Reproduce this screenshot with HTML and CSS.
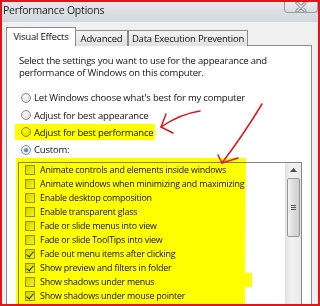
FILE: index.html
```html
<!DOCTYPE html>
<html lang="en">
<head>
    <meta charset="UTF-8">
    <title>Performance Options</title>
    <link rel="stylesheet" href="styles.css">
</head>
<body>
    <div class="frame">
        <div class="titlebar">
            <span class="title">Performance Options</span>
            <span class="close">
                <svg width="14" height="10" viewBox="0 0 14 10">
                    <path d="M3 1 L11 9 M11 1 L3 9" stroke="#6f737a" stroke-width="3" stroke-linecap="round"/>
                    <path d="M3 1 L11 9 M11 1 L3 9" stroke="#ffffff" stroke-width="1.4" stroke-linecap="round"/>
                </svg>
            </span>
        </div>

        <div class="window-body">
            <div class="tabs">
                <div class="tab active">Visual Effects</div>
                <div class="tab tab-adv">Advanced</div>
                <div class="tab tab-dep">Data Execution Prevention</div>
            </div>

            <div class="panel">
                <p class="intro">Select the settings you want to use for the appearance and<br>performance of Windows on this computer.</p>

                <div class="radios">
                    <div class="radio"><span class="dot"></span>Let Windows choose what's best for my computer</div>
                    <div class="radio"><span class="dot"></span>Adjust for best appearance</div>
                    <div class="radio"><span class="dot"></span>Adjust for best performance</div>
                    <div class="radio"><span class="dot on"></span>Custom:</div>
                </div>

                <div class="listbox">
                    <ul class="items">
                        <li><span class="check"></span>Animate controls and elements inside windows</li>
                        <li><span class="check"></span>Animate windows when minimizing and maximizing</li>
                        <li><span class="check"></span>Enable desktop composition</li>
                        <li><span class="check"></span>Enable transparent glass</li>
                        <li><span class="check"></span>Fade or slide menus into view</li>
                        <li><span class="check"></span>Fade or slide ToolTips into view</li>
                        <li><span class="check on"></span>Fade out menu items after clicking</li>
                        <li><span class="check on"></span>Show preview and filters in folder</li>
                        <li><span class="check"></span>Show shadows under menus</li>
                        <li><span class="check on"></span>Show shadows under mouse pointer</li>
                    </ul>
                    <div class="scrollbar">
                        <div class="sb-up">
                            <svg width="7" height="4" viewBox="0 0 7 4"><path d="M0 4 L3.5 0 L7 4 Z" fill="#4d4d4d"/></svg>
                        </div>
                        <div class="sb-thumb"><span class="grip"></span></div>
                    </div>
                </div>
            </div>
        </div>

        <!-- marker highlights drawn on top of the dialog -->
        <svg class="marker" width="320" height="306" viewBox="0 0 320 306">
            <rect x="15" y="124" width="140" height="16" fill="#ffff00"/>
            <polygon points="16,158 246,158 245,273 252,273 252,287 245,287 245,306 16,306" fill="#ffff00"/>
        </svg>

        <svg class="arrows" width="320" height="306" viewBox="0 0 320 306">
            <g fill="none" stroke="#e3141b" stroke-width="1.5" stroke-linecap="round" stroke-linejoin="round">
                <path d="M200 111 Q180 114 161 127"/>
                <path d="M166 114 L161 127 L173 133"/>
                <path d="M262 104 Q244 134 222 163"/>
                <path d="M218 155 L222 163 L238 158"/>
            </g>
        </svg>
    </div>
</body>
</html>
```

FILE: styles.css
```css
body {
    margin: 0;
    font-family: "Open Sans", "Noto Sans", sans-serif;
    font-size: 9.5px;
    letter-spacing: -0.2px;
    color: #111;
}
.frame {
    position: relative;
    width: 320px;
    height: 306px;
    box-sizing: border-box;
    border: 2px solid #e3141b;
    background: #f0f0f0;
    overflow: hidden;
}
.titlebar {
    display: flex;
    height: 20px;
    background: linear-gradient(#e4e7eb, #d3d8de);
}
.title {
    padding: 1px 0 0 1px;
    line-height: 14px;
    font-size: 10.5px;
    color: #222;
}
.close {
    margin-left: auto;
    width: 32px;
    height: 10px;
    display: flex;
    justify-content: center;
    align-items: center;
    border: 1px solid #9a9ca0;
    border-top: 0;
    border-radius: 0 0 4px 4px;
    background: linear-gradient(#eceef1, #d8dce1);
}
.window-body {
    padding: 5px 6px 0 4px;
}
.tabs {
    display: flex;
    align-items: flex-end;
    margin-bottom: -1px;
}
.tab {
    box-sizing: border-box;
    height: 16px;
    border: 1px solid #898c95;
    border-bottom: 0;
    background: linear-gradient(#f3f3f3, #e1e1e1);
    text-align: center;
    line-height: 15px;
    white-space: nowrap;
}
.tab.active {
    position: relative;
    z-index: 1;
    width: 70px;
    height: 19px;
    line-height: 17px;
    background: #fff;
}
.tab-adv {
    width: 52px;
    border-left: 0;
}
.tab-dep {
    width: 120px;
    border-left: 1px solid #898c95;
}
.panel {
    height: 300px;
    border: 1px solid #898c95;
    background: #fff;
    padding: 9px 0 0 12px;
}
.intro {
    margin: 0;
    line-height: 12px;
}
.radios {
    margin-top: 10px;
}
.radio {
    display: flex;
    align-items: center;
    height: 17.4px;
    padding-left: 2px;
}
.dot {
    width: 10px;
    height: 10px;
    box-sizing: border-box;
    border-radius: 50%;
    border: 1px solid #8d8d8d;
    background: radial-gradient(circle at 40% 35%, #fdfdfd, #d6d6d6);
    margin-right: 3px;
    display: flex;
    justify-content: center;
    align-items: center;
}
.dot.on::after {
    content: "";
    width: 4px;
    height: 4px;
    border-radius: 50%;
    background: radial-gradient(circle at 40% 35%, #6fb2e6, #0d4a8a);
}
.listbox {
    display: flex;
    margin: 3px 0 0 -1px;
    width: 284px;
    height: 160px;
    box-sizing: border-box;
    border: 1px solid #828790;
}
.items {
    flex: 1;
    list-style: none;
    margin: 0;
    padding: 0;
    font-size: 8.9px;
}
.items li {
    display: flex;
    align-items: center;
    height: 14px;
    padding-left: 6px;
}
.check {
    width: 10px;
    height: 10px;
    box-sizing: border-box;
    border: 1px solid #8f8f8f;
    background: linear-gradient(135deg, #d2d2d2, #f7f7f7);
    margin-right: 5px;
    position: relative;
    flex: none;
}
.check.on::after {
    content: "";
    position: absolute;
    left: 2px;
    top: 0;
    width: 3px;
    height: 6px;
    border: solid #1f2a3a;
    border-width: 0 1.5px 1.5px 0;
    transform: rotate(40deg);
}
.scrollbar {
    width: 15px;
    background: linear-gradient(90deg, #e4e4e4, #f3f3f3 40%, #e9e9e9);
    border-left: 1px solid #e0e0e0;
}
.sb-up {
    height: 15px;
    display: flex;
    justify-content: center;
    align-items: center;
}
.sb-thumb {
    margin: 0 1px;
    height: 59px;
    box-sizing: border-box;
    border: 1px solid #979797;
    border-radius: 2px;
    background: linear-gradient(90deg, #f2f2f2, #dcdcdc 50%, #cfcfcf);
    display: flex;
    justify-content: center;
    align-items: center;
}
.grip {
    width: 5px;
    height: 5px;
    background: repeating-linear-gradient(#555 0 1px, transparent 1px 2px);
}
.marker {
    position: absolute;
    left: -2px;
    top: -2px;
    mix-blend-mode: multiply;
}
.arrows {
    position: absolute;
    left: -2px;
    top: -2px;
}
```
